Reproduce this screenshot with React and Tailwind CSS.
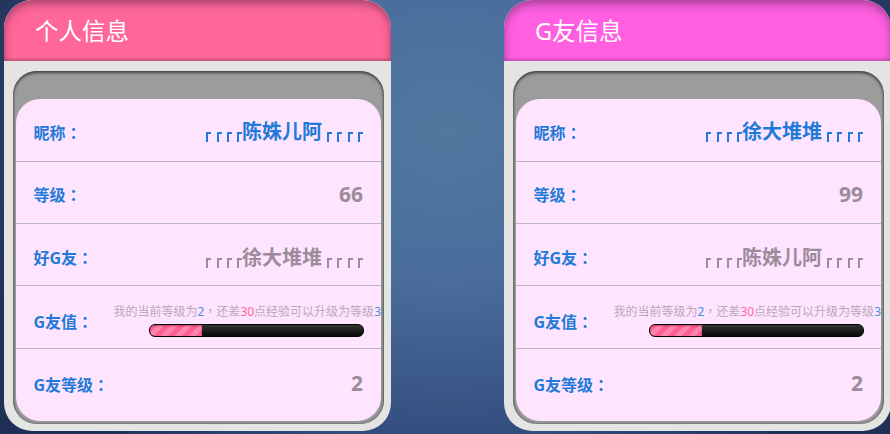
const font = { fontFamily: '"Noto Sans", "Noto Sans CJK SC", sans-serif' };
const tc = { fontFamily: '"Noto Sans CJK TC", sans-serif' };

function Deco({ children, muted }) {
  return (
    <span className={"flex items-end text-[20px] font-bold leading-[26px] " + (muted ? "text-[#9b8b9b]" : "text-[#1f7ad8]")}>
      <Marks />
      <span className="ml-[-1px] mr-[5px]">{children}</span>
      <Marks />
    </span>
  );
}

function Marks() {
  return (
    <span className="mb-[3px] flex gap-[5.3px] pr-[1px]">
      {[0, 1, 2, 3].map((i) => (
        <span key={i} className="h-[10px] w-[5px] border-l-2 border-t-2 border-current" />
      ))}
    </span>
  );
}

function Row({ label, children, size }) {
  return (
    <div className={"flex items-center justify-between pl-[17.5px] pr-[17px] " + size}>
      <span className="text-[16px] font-bold text-[#1f7ad8]">
        {label}
        <span style={tc}>：</span>
      </span>
      {children}
    </div>
  );
}

function Value({ children }) {
  return <span className="mr-[1px] text-[21px] font-bold text-[#9b8b9b]">{children}</span>;
}

function Card({ title, headerClass, name, level, friend }) {
  return (
    <div className="h-[431px] w-[387px] shrink-0 overflow-hidden rounded-[28px] bg-[#e4e4e2]">
      <div className={"flex h-[61px] items-center rounded-t-[28px] pl-[31px] pt-[2px] text-[23.5px] text-white " + headerClass}>
        {title}
      </div>
      <div className="ml-[9px] mr-[7px] mt-[10px] h-[353px] rounded-[24px] bg-[#9c9c9c] px-[3px] pb-[3px] pt-[28px] shadow-[inset_0_2px_3px_rgba(50,50,50,0.75),inset_0_0_3px_rgba(50,50,50,0.7)]">
        <div className="h-[322px] rounded-[24px] bg-[#ffe4ff]">
          <Row label="昵称" size="h-[63px] pt-[4px] border-b border-[#bdb5bd]"><Deco>{name}</Deco></Row>
          <Row label="等级" size="h-[62px] pt-[4px] border-b border-[#bdb5bd]"><Value>{level}</Value></Row>
          <Row label="好G友" size="h-[62px] pt-[6px] border-b border-[#bdb5bd]"><Deco muted>{friend}</Deco></Row>
          <Row label="G友值" size="h-[63px] pt-[8px] border-b border-[#bdb5bd]">
            <div className="mr-[-17px] flex flex-col items-end">
              <p className="mt-[-3px] whitespace-nowrap text-[12px] leading-[18px] text-[#b8a8b8]">
                我的当前等级为<span className="text-[#4a90d8]">2</span><span style={tc}>，</span>还差<span className="text-[#ff6699]">30</span>点经验可以升级为等级<span className="text-[#4a90d8]">3</span>
              </p>
              <div className="mr-[17px] mt-[3px] h-[13px] w-[215px] overflow-hidden rounded-[6px] border border-black bg-gradient-to-b from-[#333] to-[#0a0a0a]">
                <div className="h-full w-[52px] bg-[repeating-linear-gradient(135deg,#ff5f93_0,#ff5f93_5px,#ff85ad_5px,#ff85ad_10px)] shadow-[inset_0_1px_2px_rgba(120,0,50,0.5)]" />
              </div>
            </div>
          </Row>
          <Row label="G友等级" size="h-[62px] pt-[8px]"><Value>2</Value></Row>
        </div>
      </div>
    </div>
  );
}

export default function App() {
  return (
    <div
      style={font}
      className="flex h-[434px] w-[890px] gap-[113px] overflow-hidden bg-[radial-gradient(ellipse_500px_430px_at_447px_130px,#52789f_0%,#4a6d9c_35%,#344f7f_70%,#1f2f55_100%)] pl-[4px]"
    >
      <Card
        title="个人信息"
        headerClass="bg-[#ff6699] shadow-[inset_0_4px_8px_rgba(90,40,70,0.55),inset_0_-2px_2px_rgba(120,60,90,0.3)]"
        name="陈姝儿阿"
        level="66"
        friend="徐大堆堆"
      />
      <Card
        title="G友信息"
        headerClass="bg-[#ff5fe0] shadow-[inset_0_4px_8px_rgba(90,40,90,0.55),inset_0_-2px_2px_rgba(120,60,120,0.3)]"
        name="徐大堆堆"
        level="99"
        friend="陈姝儿阿"
      />
    </div>
  );
}
